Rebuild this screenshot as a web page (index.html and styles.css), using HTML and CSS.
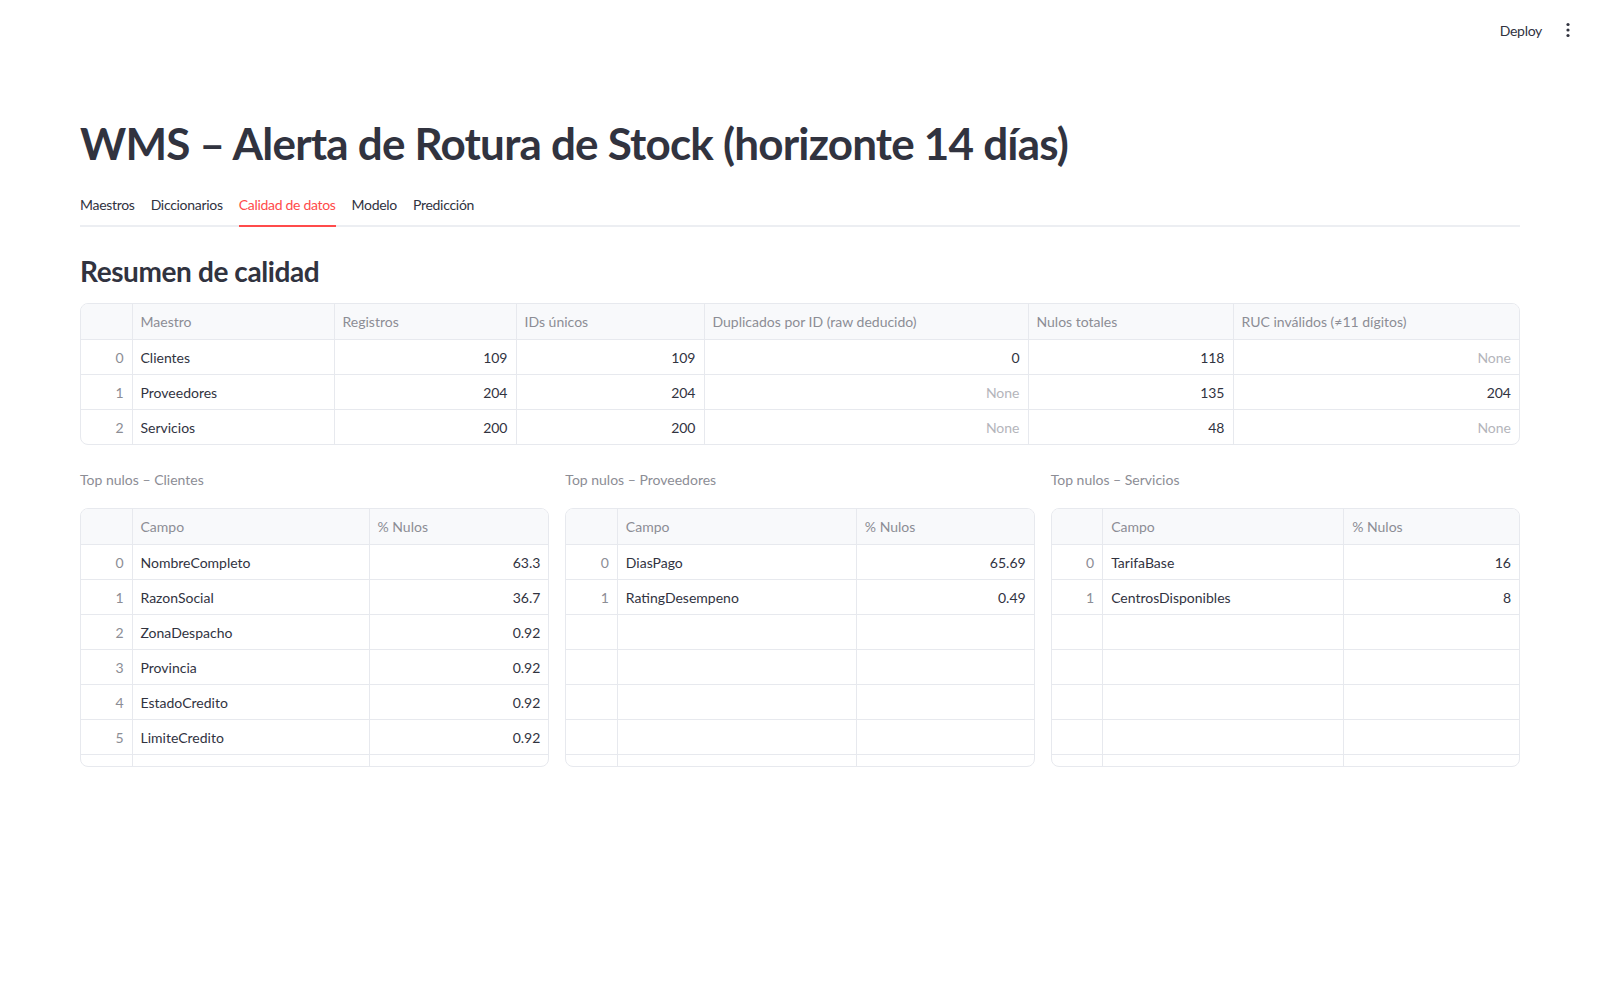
FILE: index.html
```html
<!DOCTYPE html>
<html lang="es">
<head>
    <meta charset="UTF-8">
    <meta name="viewport" content="width=device-width, initial-scale=1.0">
    <title>WMS – Alerta de Rotura de Stock</title>
    <link rel="stylesheet" href="styles.css">
</head>
<body>
    <header class="topbar">
        <button class="deploy">Deploy</button>
        <button class="menu" aria-label="Menu">
            <svg width="16" height="16" viewBox="0 0 16 16"><circle cx="8" cy="2.5" r="1.6"/><circle cx="8" cy="8" r="1.6"/><circle cx="8" cy="13.5" r="1.6"/></svg>
        </button>
    </header>

    <main class="main">
        <h1 class="title">WMS – Alerta de Rotura de Stock (horizonte 14 días)</h1>

        <nav class="tabs">
            <span class="tab">Maestros</span>
            <span class="tab">Diccionarios</span>
            <span class="tab active">Calidad de datos</span>
            <span class="tab">Modelo</span>
            <span class="tab">Predicción</span>
        </nav>

        <h3 class="subheader">Resumen de calidad</h3>

        <div class="frame">
            <table class="grid">
                <colgroup>
                    <col style="width:51px"><col style="width:202px"><col style="width:182px"><col style="width:188px"><col style="width:324px"><col style="width:205px"><col>
                </colgroup>
                <thead>
                    <tr><th></th><th>Maestro</th><th>Registros</th><th>IDs únicos</th><th>Duplicados por ID (raw deducido)</th><th>Nulos totales</th><th>RUC inválidos (≠11 dígitos)</th></tr>
                </thead>
                <tbody>
                    <tr><td class="idx">0</td><td>Clientes</td><td class="num">109</td><td class="num">109</td><td class="num">0</td><td class="num">118</td><td class="num none">None</td></tr>
                    <tr><td class="idx">1</td><td>Proveedores</td><td class="num">204</td><td class="num">204</td><td class="num none">None</td><td class="num">135</td><td class="num">204</td></tr>
                    <tr><td class="idx">2</td><td>Servicios</td><td class="num">200</td><td class="num">200</td><td class="num none">None</td><td class="num">48</td><td class="num none">None</td></tr>
                </tbody>
            </table>
        </div>

        <div class="columns">
            <section class="column">
                <p class="caption">Top nulos – Clientes</p>
                <div class="frame small">
                    <table class="grid">
                        <colgroup><col style="width:51px"><col style="width:237px"><col></colgroup>
                        <thead><tr><th></th><th>Campo</th><th>% Nulos</th></tr></thead>
                        <tbody>
                            <tr><td class="idx">0</td><td>NombreCompleto</td><td class="num">63.3</td></tr>
                            <tr><td class="idx">1</td><td>RazonSocial</td><td class="num">36.7</td></tr>
                            <tr><td class="idx">2</td><td>ZonaDespacho</td><td class="num">0.92</td></tr>
                            <tr><td class="idx">3</td><td>Provincia</td><td class="num">0.92</td></tr>
                            <tr><td class="idx">4</td><td>EstadoCredito</td><td class="num">0.92</td></tr>
                            <tr><td class="idx">5</td><td>LimiteCredito</td><td class="num">0.92</td></tr>
                            <tr><td></td><td></td><td></td></tr>
                        </tbody>
                    </table>
                </div>
            </section>
            <section class="column">
                <p class="caption">Top nulos – Proveedores</p>
                <div class="frame small">
                    <table class="grid">
                        <colgroup><col style="width:51px"><col style="width:239px"><col></colgroup>
                        <thead><tr><th></th><th>Campo</th><th>% Nulos</th></tr></thead>
                        <tbody>
                            <tr><td class="idx">0</td><td>DiasPago</td><td class="num">65.69</td></tr>
                            <tr><td class="idx">1</td><td>RatingDesempeno</td><td class="num">0.49</td></tr>
                            <tr><td></td><td></td><td></td></tr>
                            <tr><td></td><td></td><td></td></tr>
                            <tr><td></td><td></td><td></td></tr>
                            <tr><td></td><td></td><td></td></tr>
                            <tr><td></td><td></td><td></td></tr>
                        </tbody>
                    </table>
                </div>
            </section>
            <section class="column">
                <p class="caption">Top nulos – Servicios</p>
                <div class="frame small">
                    <table class="grid">
                        <colgroup><col style="width:51px"><col style="width:241px"><col></colgroup>
                        <thead><tr><th></th><th>Campo</th><th>% Nulos</th></tr></thead>
                        <tbody>
                            <tr><td class="idx">0</td><td>TarifaBase</td><td class="num">16</td></tr>
                            <tr><td class="idx">1</td><td>CentrosDisponibles</td><td class="num">8</td></tr>
                            <tr><td></td><td></td><td></td></tr>
                            <tr><td></td><td></td><td></td></tr>
                            <tr><td></td><td></td><td></td></tr>
                            <tr><td></td><td></td><td></td></tr>
                            <tr><td></td><td></td><td></td></tr>
                        </tbody>
                    </table>
                </div>
            </section>
        </div>
    </main>
</body>
</html>
```

FILE: styles.css
```css
body {
    margin: 0;
    background: #ffffff;
    color: #31333f;
    font-family: "Lato", "Noto Sans", sans-serif;
}
.topbar {
    height: 60px;
    display: flex;
    justify-content: flex-end;
    align-items: center;
    gap: 10px;
    padding-right: 20px;
}
.deploy {
    background: none;
    border: none;
    font-family: inherit;
    font-size: 14px;
    letter-spacing: -0.3px;
    color: #31333f;
    padding: 4px 4px;
}
.menu {
    background: none;
    border: none;
    padding: 4px;
    display: flex;
}
.menu svg {
    fill: #31333f;
}
.main {
    padding: 57px 80px 80px;
}
.title {
    margin: 0;
    font-size: 44px;
    font-weight: 700;
    line-height: 52px;
    letter-spacing: -0.8px;
}
.tabs {
    display: flex;
    gap: 16px;
    margin-top: 16px;
    border-bottom: 2px solid #eceef2;
}
.tab {
    font-size: 14px;
    letter-spacing: -0.3px;
    height: 40px;
    line-height: 40px;
    margin-bottom: -2px;
    border-bottom: 2px solid transparent;
}
.tab.active {
    color: #ff4b4b;
    border-bottom: 2px solid #ff4b4b;
}
.subheader {
    margin: 27px 0 15px;
    font-size: 28px;
    font-weight: 700;
    line-height: 34px;
    letter-spacing: -0.4px;
}
.frame {
    border: 1px solid #e7e9ee;
    border-radius: 8px;
    overflow: hidden;
}
.grid {
    width: 100%;
    border-collapse: collapse;
    table-layout: fixed;
    font-size: 14px;
}
.grid th {
    background: #f8f9fb;
    color: #8c8d95;
    font-weight: 400;
    text-align: left;
    height: 35px;
    padding: 0 8px;
    border-bottom: 1px solid #e7e9ee;
    border-left: 1px solid #e7e9ee;
}
.grid td {
    height: 34px;
    padding: 0 8px;
    border-bottom: 1px solid #e7e9ee;
    border-left: 1px solid #e7e9ee;
    white-space: nowrap;
}
.grid th:first-child,
.grid td:first-child {
    border-left: none;
}
.grid tbody tr:last-child td {
    border-bottom: none;
}
.grid .idx {
    text-align: right;
    color: #8c8d95;
}
.grid .num {
    text-align: right;
}
.grid .none {
    color: #b4b5bb;
}
.columns {
    display: grid;
    grid-template-columns: repeat(3, 1fr);
    gap: 16px;
    margin-top: 25px;
}
.caption {
    margin: 0 0 18px;
    font-size: 14px;
    line-height: 20px;
    color: #8c8d95;
}
.small {
    height: 257px;
}
```
